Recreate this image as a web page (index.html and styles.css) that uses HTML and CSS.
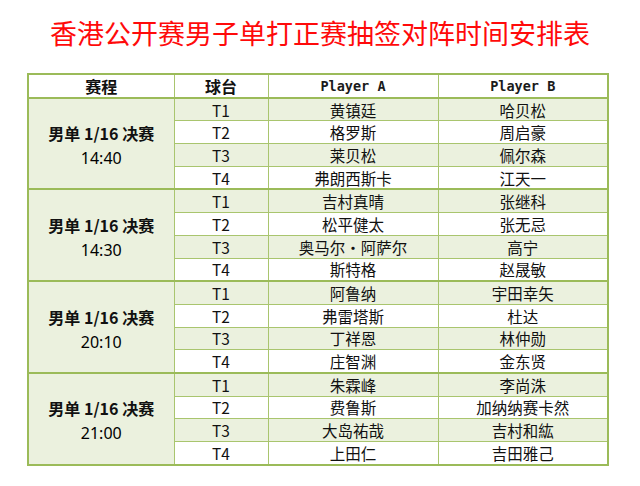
FILE: index.html
```html
<!DOCTYPE html>
<html lang="zh-CN">
<head>
<meta charset="utf-8">
<title>香港公开赛男子单打正赛抽签对阵时间安排表</title>
<link rel="stylesheet" href="styles.css">
</head>
<body>
<div class="page">
  <h1 class="title">香港公开赛男子单打正赛抽签对阵时间安排表</h1>
  <table class="schedule">
    <colgroup>
      <col class="c-stage"><col class="c-table"><col class="c-player"><col class="c-player">
    </colgroup>
    <thead>
      <tr><th>赛程</th><th>球台</th><th class="mono">Player A</th><th class="mono">Player B</th></tr>
    </thead>
    <tbody class="group">
      <tr class="odd"><td class="stage" rowspan="4">男单 1/16 决赛<br><span class="time">14:40</span></td><td>T1</td><td>黄镇廷</td><td>哈贝松</td></tr>
      <tr><td>T2</td><td>格罗斯</td><td>周启豪</td></tr>
      <tr class="odd"><td>T3</td><td>莱贝松</td><td>佩尔森</td></tr>
      <tr><td>T4</td><td>弗朗西斯卡</td><td>江天一</td></tr>
    </tbody>
    <tbody class="group">
      <tr class="odd"><td class="stage" rowspan="4">男单 1/16 决赛<br><span class="time">14:30</span></td><td>T1</td><td>吉村真晴</td><td>张继科</td></tr>
      <tr><td>T2</td><td>松平健太</td><td>张无忌</td></tr>
      <tr class="odd"><td>T3</td><td>奥马尔・阿萨尔</td><td>高宁</td></tr>
      <tr><td>T4</td><td>斯特格</td><td>赵晟敏</td></tr>
    </tbody>
    <tbody class="group">
      <tr class="odd"><td class="stage" rowspan="4">男单 1/16 决赛<br><span class="time">20:10</span></td><td>T1</td><td>阿鲁纳</td><td>宇田幸矢</td></tr>
      <tr><td>T2</td><td>弗雷塔斯</td><td>杜达</td></tr>
      <tr class="odd"><td>T3</td><td>丁祥恩</td><td>林仲勋</td></tr>
      <tr><td>T4</td><td>庄智渊</td><td>金东贤</td></tr>
    </tbody>
    <tbody class="group">
      <tr class="odd"><td class="stage" rowspan="4">男单 1/16 决赛<br><span class="time">21:00</span></td><td>T1</td><td>朱霖峰</td><td>李尚洙</td></tr>
      <tr><td>T2</td><td>费鲁斯</td><td>加纳纳赛卡然</td></tr>
      <tr class="odd"><td>T3</td><td>大岛祐哉</td><td>吉村和紘</td></tr>
      <tr><td>T4</td><td>上田仁</td><td>吉田雅己</td></tr>
    </tbody>
  </table>
</div>
</body>
</html>
```

FILE: styles.css
```css
html, body {
  margin: 0;
  padding: 0;
  background: #ffffff;
}

.page {
  width: 640px;
  height: 486px;
  font-family: "Noto Sans CJK SC", "Noto Sans", sans-serif;
  color: #111111;
}

.title {
  margin: 0;
  height: 73px;
  padding-top: 16px;
  box-sizing: border-box;
  text-align: center;
  font-size: 27px;
  line-height: 34px;
  font-weight: 400;
  color: #ff0a0a;
}

.schedule {
  margin-left: 27px;
  width: 580px;
  border-collapse: collapse;
  table-layout: fixed;
  border: 2px solid #9bbb59;
}

.c-stage { width: 146px; }
.c-table { width: 94px; }
.c-player { width: 170px; }

.schedule th,
.schedule td {
  height: 21.7px;
  padding: 0;
  border: 1px solid #a9c56e;
  text-align: center;
  vertical-align: middle;
  font-size: 15.5px;
  line-height: 20px;
  font-weight: 400;
  background: #ffffff;
}

.schedule thead th {
  font-size: 16px;
  font-weight: 700;
  border-bottom: 2px solid #9bbb59;
}

.schedule th.mono {
  font-family: "DejaVu Sans Mono", "Liberation Mono", monospace;
  font-size: 13.5px;
  font-weight: 700;
  color: #1a1a1a;
}

.schedule tbody.group {
  border-top: 2px solid #9bbb59;
}

.schedule tr.odd td {
  background: #ebf1de;
}

.schedule td.stage {
  background: #ebf1de;
  font-weight: 700;
  font-size: 16px;
  line-height: 24px;
  padding-top: 4px;
}

.time {
  font-family: "Noto Sans", "DejaVu Sans", sans-serif;
  font-size: 16px;
  font-weight: 400;
  color: #000000;
}
```
